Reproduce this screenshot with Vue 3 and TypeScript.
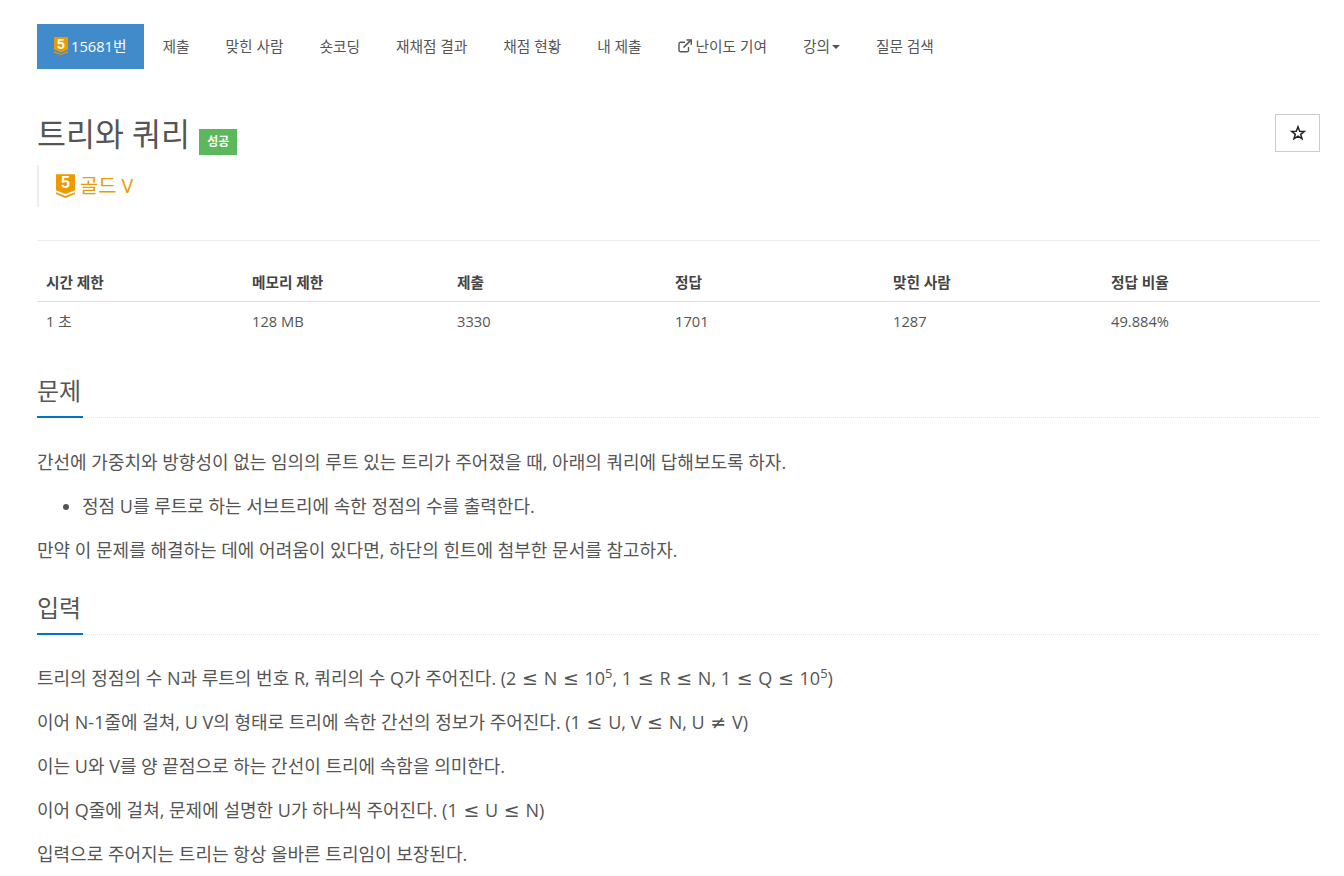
<script setup lang="ts">
const navItems: { label: string; ext?: boolean; caret?: boolean }[] = [
  { label: '제출' },
  { label: '맞힌 사람' },
  { label: '숏코딩' },
  { label: '재채점 결과' },
  { label: '채점 현황' },
  { label: '내 제출' },
  { label: '난이도 기여', ext: true },
  { label: '강의', caret: true },
  { label: '질문 검색' },
]
const heads = ['시간 제한', '메모리 제한', '제출', '정답', '맞힌 사람', '정답 비율']
const cells = ['1 초', '128 MB', '3330', '1701', '1287', '49.884%']
</script>

<template>
  <div class="page">
    <nav class="tabs">
      <a class="tab active">
        <svg class="tier small" viewBox="0 0 14 18">
          <path d="M0 0H14V12.5L7 15.5L0 12.5Z" fill="#ec9a00" />
          <path d="M0 14L7 17L14 14V15.5L7 18L0 15.5Z" fill="#ec9a00" />
          <text x="7" y="11.5" text-anchor="middle" class="tier-num">5</text>
        </svg>
        <span>15681번</span>
      </a>
      <a v-for="item in navItems" :key="item.label" class="tab">
        <svg v-if="item.ext" class="ext" viewBox="0 0 14 14" fill="none" stroke="#555" stroke-width="1.4">
          <path d="M10.5 8V11.2A1.6 1.6 0 0 1 8.9 12.8H2.6A1.6 1.6 0 0 1 1 11.2V4.9A1.6 1.6 0 0 1 2.6 3.3H7" />
          <path d="M5.5 8.5L12.5 1.5" stroke-width="1.7" />
          <path d="M8.5 1H13.3V5.8" stroke-width="1.5" />
        </svg>
        <span>{{ item.label }}</span>
        <i v-if="item.caret" class="caret"></i>
      </a>
    </nav>

    <header class="title-row">
      <h1 class="title">트리와 쿼리 <span class="label">성공</span></h1>
      <button class="star" aria-label="star">
        <svg viewBox="0 0 16 16" width="16" height="16" fill="none" stroke="#222" stroke-width="1.5">
          <path d="M8 1.8L9.7 6.2L14.4 6.4L10.7 9.3L12 13.8L8 11.2L4 13.8L5.3 9.3L1.6 6.4L6.3 6.2Z" />
        </svg>
      </button>
    </header>

    <div class="tier-quote">
      <svg class="tier big" viewBox="0 0 20 25">
        <path d="M0 0H20V17L10 21L0 17Z" fill="#ec9a00" />
        <path d="M0 19L10 23L20 19V21L10 25L0 21Z" fill="#ec9a00" />
        <text x="10" y="15" text-anchor="middle" class="tier-num">5</text>
      </svg>
      <span>골드 V</span>
    </div>

    <hr class="rule" />

    <table class="stats">
      <thead>
        <tr><th v-for="h in heads" :key="h">{{ h }}</th></tr>
      </thead>
      <tbody>
        <tr><td v-for="c in cells" :key="c">{{ c }}</td></tr>
      </tbody>
    </table>

    <section class="section first">
      <div class="headline"><h2>문제</h2></div>
      <p>간선에 가중치와 방향성이 없는 임의의 루트 있는 트리가 주어졌을 때, 아래의 쿼리에 답해보도록 하자.</p>
      <ul>
        <li>정점 U를 루트로 하는 서브트리에 속한 정점의 수를 출력한다.</li>
      </ul>
      <p>만약 이 문제를 해결하는 데에 어려움이 있다면, 하단의 힌트에 첨부한 문서를 참고하자.</p>
    </section>

    <section class="section">
      <div class="headline"><h2>입력</h2></div>
      <p>트리의 정점의 수 N과 루트의 번호 R, 쿼리의 수 Q가 주어진다. (2 <b class="rel">≤</b> N <b class="rel">≤</b> 10<sup>5</sup>, 1 <b class="rel">≤</b> R <b class="rel">≤</b> N, 1 <b class="rel">≤</b> Q <b class="rel">≤</b> 10<sup>5</sup>)</p>
      <p>이어 N-1줄에 걸쳐, U V의 형태로 트리에 속한 간선의 정보가 주어진다. (1 <b class="rel">≤</b> U, V <b class="rel">≤</b> N, U <b class="rel">≠</b> V)</p>
      <p>이는 U와 V를 양 끝점으로 하는 간선이 트리에 속함을 의미한다.</p>
      <p>이어 Q줄에 걸쳐, 문제에 설명한 U가 하나씩 주어진다. (1 <b class="rel">≤</b> U <b class="rel">≤</b> N)</p>
      <p>입력으로 주어지는 트리는 항상 올바른 트리임이 보장된다.</p>
    </section>
  </div>
</template>

<style>
html, body { background: #fff; overflow: hidden; }
</style>

<style scoped>
.page {
  height: 876px;
  box-sizing: border-box;
  overflow: hidden;
  padding: 24px 24px 0 37px;
  color: #555;
  font-family: "Open Sans", "Noto Sans CJK KR", sans-serif;
  font-size: 15px;
  line-height: 20px;
}
.tabs { display: flex; height: 45px; }
.tab {
  display: flex;
  align-items: center;
  padding: 0 18px 1px;
  white-space: nowrap;
  color: #555;
  font-size: 14.7px;
}
.tab.active {
  background: #428bca;
  color: #fff;
  padding: 0 17px 1px;
  margin-right: 1px;
}
.tier.small { width: 14px; height: 18px; margin-right: 3px; }
.tier.big { width: 19px; height: 24px; margin-right: 5px; }
.tier-num { fill: #fff; font-weight: 700; font-size: 14px; font-family: "Liberation Sans", sans-serif; }
.big .tier-num { font-size: 17px; }
.ext { width: 14px; height: 14px; margin-right: 4px; }
.caret {
  width: 0; height: 0; margin-left: 2px; margin-top: 2px;
  border-top: 4px solid #555;
  border-left: 4px solid transparent;
  border-right: 4px solid transparent;
}
.title-row {
  display: flex;
  justify-content: space-between;
  align-items: flex-start;
  margin-top: 45px;
  height: 51px;
}
.title {
  margin: 0;
  font-size: 31.5px;
  line-height: 40px;
  font-weight: 400;
  color: #555;
  white-space: nowrap;
}
.label {
  display: inline-block;
  vertical-align: 0;
  background: #5cb85c;
  color: #fff;
  font-size: 12px;
  font-weight: 700;
  line-height: 26px;
  height: 26px;
  padding: 0 8px;
  margin-left: 1px;
}
.star {
  width: 45px;
  height: 38px;
  border: 1px solid #ccc;
  background: #fff;
  padding: 0;
  display: flex;
  align-items: center;
  justify-content: center;
}
.tier-quote {
  display: flex;
  align-items: center;
  height: 42px;
  border-left: 2px solid #eee;
  padding-left: 17px;
  color: #ec9a00;
  font-size: 19.8px;
}
.rule { border: 0; border-top: 1px solid #eee; margin: 33px 0 0; }
.stats {
  width: 100%;
  border-collapse: collapse;
  table-layout: fixed;
  margin-top: 21px;
}
.stats th, .stats td {
  box-sizing: border-box;
  text-align: left;
  padding: 9px 9px 11px;
  font-size: 14.7px;
  line-height: 20px;
}
.stats th { font-weight: 700; color: #444; border-bottom: 1px solid #ddd; padding: 10px 9px 9px; }
.stats th:nth-child(1) { width: 206px; }
.stats th:nth-child(2) { width: 205px; }
.stats th:nth-child(3), .stats th:nth-child(4), .stats th:nth-child(5) { width: 218px; }
.section { margin-top: 22px; }
.section.first { margin-top: 26px; }
.headline { border-bottom: 1px dotted #e6e6e6; height: 49px; margin-bottom: 30px; }
.first .headline { margin-bottom: 31px; }
.headline h2 {
  display: inline-block;
  margin: 0;
  height: 50px;
  box-sizing: border-box;
  padding: 8px 0;
  width: 46px;
  border-bottom: 2px solid #0076c0;
  font-size: 24px;
  line-height: 30px;
  font-weight: 400;
  color: #555;
}
p {
  margin: 0 0 18px;
  font-size: 18px;
  line-height: 26px;
  color: #555;
}
ul { margin: 0 0 18px; padding-left: 45px; font-size: 18px; line-height: 26px; }
.rel { font-weight: 400; margin: 0 1px; font-family: "DejaVu Sans", sans-serif; font-size: 19px; line-height: 0; }
sup { font-size: 13px; line-height: 0; vertical-align: 7px; }
</style>
